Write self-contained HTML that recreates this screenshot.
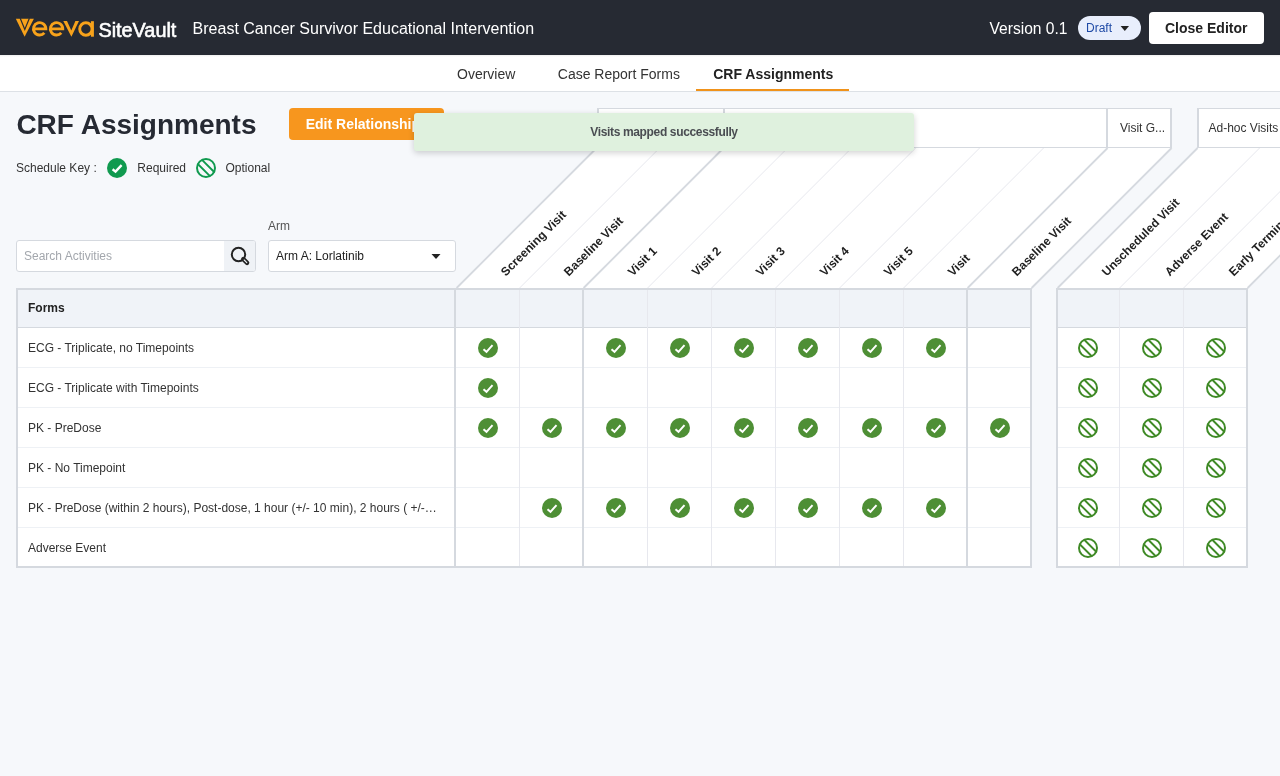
<!DOCTYPE html>
<html><head><meta charset="utf-8"><style>
html,body{margin:0;padding:0}
body{width:1280px;height:776px;overflow:hidden;position:relative;background:#f6f8fb;font-family:"Liberation Sans",sans-serif}
.t{position:absolute;line-height:1;white-space:nowrap}
#root{position:absolute;left:0;top:0;width:1280px;height:776px;will-change:transform}
</style></head><body><div id="root">
<div style="position:absolute;left:0;top:0;width:1280px;height:55px;background:#262a33"></div>
<svg style="position:absolute;left:0;top:0" width="200" height="55" viewBox="0 0 200 55">
<path d="M15.8,18.8 L33.9,18.8 L24.6,36.8 Z" fill="#f7a21b"/>
<path d="M20.2,18.2 L24.8,29.4 L29.4,18.2" fill="none" stroke="#262a33" stroke-width="1.2" stroke-linejoin="miter"/>
<g fill="none" stroke="#f7a21b" stroke-width="2.9">
<path d="M35,28.85 L45.85,28.85 A6.2,6.2 0 1 0 44.35,32.9"/>
<path d="M51.9,28.85 L62.75,28.85 A6.2,6.2 0 1 0 61.25,32.9"/>
<circle cx="85.9" cy="29" r="6.2"/>
</g>
<path d="M63.3,21.1 L67,21.1 L71.3,30.6 L75.4,21.1 L79,21.1 L71.4,36.7 Z" fill="#f7a21b"/>
<rect x="90.9" y="21.2" width="3" height="15.5" fill="#f7a21b"/>
<text x="98.4" y="36.5" font-family="Liberation Sans" font-weight="400" font-size="20.4" fill="#fff" stroke="#fff" stroke-width="0.6" textLength="78" lengthAdjust="spacingAndGlyphs">SiteVault</text>
</svg>
<div class="t" style="left:192.6px;top:21.00px;font-size:16px;font-weight:400;color:#fff;">Breast Cancer Survivor Educational Intervention</div>
<div class="t" style="left:989.5px;top:21.00px;font-size:15.6px;font-weight:400;color:#fff;">Version 0.1</div>
<div style="position:absolute;left:1078px;top:16px;width:63px;height:24px;border-radius:12px;background:#e8eefc"></div>
<div class="t" style="left:1086px;top:22.00px;font-size:12px;font-weight:400;color:#1f4aa6;">Draft</div>
<svg style="position:absolute;left:1120px;top:25px" width="10" height="7"><path d="M0.6,1 L9,1 L4.8,6 Z" fill="#222"/></svg>
<div style="position:absolute;left:1149px;top:12px;width:115px;height:32px;border-radius:4px;background:#fff"></div>
<div class="t" style="left:1165px;top:21.00px;font-size:14px;font-weight:700;color:#222;">Close Editor</div>
<div style="position:absolute;left:0;top:55px;width:1280px;height:36px;background:#fff;border-bottom:1px solid #dde1e6"></div>
<div style="position:absolute;left:0;top:55px;width:1280px;height:2px;background:linear-gradient(rgba(0,0,0,0.07),rgba(0,0,0,0))"></div>
<div class="t" style="left:457px;top:67.00px;font-size:14px;font-weight:400;color:#333;">Overview</div>
<div class="t" style="left:557.8px;top:67.00px;font-size:14px;font-weight:400;color:#333;">Case Report Forms</div>
<div class="t" style="left:713.2px;top:67.00px;font-size:14px;font-weight:700;color:#222;">CRF Assignments</div>
<div style="position:absolute;left:696px;top:89px;width:153px;height:2px;background:#f0921a"></div>
<div class="t" style="left:16.4px;top:111.00px;font-size:28px;font-weight:700;color:#262a33;">CRF Assignments</div>
<div style="position:absolute;left:289px;top:108px;width:155px;height:32px;border-radius:4px;background:#f7961e"></div>
<div class="t" style="left:305.7px;top:117.00px;font-size:14px;font-weight:700;color:#fff;">Edit Relationships</div>
<div class="t" style="left:16px;top:162.00px;font-size:12px;font-weight:400;color:#333;">Schedule Key :</div>
<svg style="position:absolute;left:107px;top:158px" width="20" height="20" viewBox="0 0 20 20"><circle cx="10" cy="10" r="10" fill="#109a4f"/><path d="M5.6,11.3 L8.5,13.6 L14.6,7.2" fill="none" stroke="#fff" stroke-width="2.4"/></svg>
<div class="t" style="left:137.3px;top:162.00px;font-size:12px;font-weight:400;color:#333;">Required</div>
<svg style="position:absolute;left:196px;top:158px" width="20" height="20" viewBox="0 0 20 20"><defs><clipPath id="kc"><circle cx="10" cy="10" r="9.5"/></clipPath></defs><circle cx="10" cy="10" r="9" fill="none" stroke="#109a4f" stroke-width="2"/><path clip-path="url(#kc)" d="M0.8,5.0 L15.0,19.2 M5.0,0.8 L19.2,15.0" stroke="#109a4f" stroke-width="1.9"/></svg>
<div class="t" style="left:225.5px;top:162.00px;font-size:12px;font-weight:400;color:#333;">Optional</div>
<div class="t" style="left:268px;top:220.00px;font-size:12px;font-weight:400;color:#555;">Arm</div>
<div style="position:absolute;left:16px;top:240px;width:238px;height:30px;border:1px solid #d5d9df;border-radius:3px;background:#fff;overflow:hidden"><div style="position:absolute;right:0;top:0;width:31px;height:30px;background:#eff2f6"></div></div>
<div class="t" style="left:24px;top:250.00px;font-size:12px;font-weight:400;color:#a3a7ad;">Search Activities</div>
<svg style="position:absolute;left:228px;top:244px" width="24" height="24" viewBox="0 0 24 24"><circle cx="10.5" cy="10.5" r="6.7" fill="none" stroke="#222" stroke-width="2"/><path d="M15.3,15.1 L19.1,18.9" stroke="#222" stroke-width="4.4" stroke-linecap="round"/><path d="M16.2,16.0 L18.8,18.6" stroke="#eff2f6" stroke-width="1.1" stroke-linecap="round"/></svg>
<div style="position:absolute;left:268px;top:240px;width:186px;height:30px;border:1px solid #d5d9df;border-radius:3px;background:#fff"></div>
<div class="t" style="left:276px;top:250.00px;font-size:12px;font-weight:400;color:#222;">Arm A: Lorlatinib</div>
<svg style="position:absolute;left:431px;top:253px" width="10" height="7"><path d="M0.5,1 L9.5,1 L5,6 Z" fill="#222"/></svg>
<svg style="position:absolute;left:0;top:0" width="1280" height="776" viewBox="0 0 1280 776">
<path d="M457,288 L1032,288 L1172,148 L597,148 Z" fill="#fff"/>
<path d="M1057,288 L1248,288 L1388,148 L1197,148 Z" fill="#fff"/>
<line x1="456.6" y1="288" x2="596.6" y2="148" stroke="#d5d9df" stroke-width="1.8"/>
<line x1="519.6" y1="288" x2="659.6" y2="148" stroke="#e7e8ee" stroke-width="1"/>
<line x1="583.6" y1="288" x2="723.6" y2="148" stroke="#d5d9df" stroke-width="1.8"/>
<line x1="647.6" y1="288" x2="787.6" y2="148" stroke="#e7e8ee" stroke-width="1"/>
<line x1="711.6" y1="288" x2="851.6" y2="148" stroke="#e7e8ee" stroke-width="1"/>
<line x1="775.6" y1="288" x2="915.6" y2="148" stroke="#e7e8ee" stroke-width="1"/>
<line x1="839.6" y1="288" x2="979.6" y2="148" stroke="#e7e8ee" stroke-width="1"/>
<line x1="903.6" y1="288" x2="1043.6" y2="148" stroke="#e7e8ee" stroke-width="1"/>
<line x1="967.6" y1="288" x2="1107.6" y2="148" stroke="#d5d9df" stroke-width="1.8"/>
<line x1="1031.6" y1="288" x2="1171.6" y2="148" stroke="#d5d9df" stroke-width="1.8"/>
<line x1="1057.6" y1="288" x2="1197.6" y2="148" stroke="#d5d9df" stroke-width="1.8"/>
<line x1="1119.6" y1="288" x2="1259.6" y2="148" stroke="#e7e8ee" stroke-width="1"/>
<line x1="1183.6" y1="288" x2="1323.6" y2="148" stroke="#e7e8ee" stroke-width="1"/>
<line x1="1247.6" y1="288" x2="1387.6" y2="148" stroke="#d5d9df" stroke-width="1.8"/>
<text x="505.8" y="276.7" transform="rotate(-45 505.8 276.7)" font-family="Liberation Sans" font-weight="700" font-size="12" fill="#222">Screening Visit</text>
<text x="568.8" y="276.7" transform="rotate(-45 568.8 276.7)" font-family="Liberation Sans" font-weight="700" font-size="12" fill="#222">Baseline Visit</text>
<text x="632.8" y="276.7" transform="rotate(-45 632.8 276.7)" font-family="Liberation Sans" font-weight="700" font-size="12" fill="#222">Visit 1</text>
<text x="696.8" y="276.7" transform="rotate(-45 696.8 276.7)" font-family="Liberation Sans" font-weight="700" font-size="12" fill="#222">Visit 2</text>
<text x="760.8" y="276.7" transform="rotate(-45 760.8 276.7)" font-family="Liberation Sans" font-weight="700" font-size="12" fill="#222">Visit 3</text>
<text x="824.8" y="276.7" transform="rotate(-45 824.8 276.7)" font-family="Liberation Sans" font-weight="700" font-size="12" fill="#222">Visit 4</text>
<text x="888.8" y="276.7" transform="rotate(-45 888.8 276.7)" font-family="Liberation Sans" font-weight="700" font-size="12" fill="#222">Visit 5</text>
<text x="952.8" y="276.7" transform="rotate(-45 952.8 276.7)" font-family="Liberation Sans" font-weight="700" font-size="12" fill="#222">Visit</text>
<text x="1016.8" y="276.7" transform="rotate(-45 1016.8 276.7)" font-family="Liberation Sans" font-weight="700" font-size="12" fill="#222">Baseline Visit</text>
<text x="1106.8" y="276.7" transform="rotate(-45 1106.8 276.7)" font-family="Liberation Sans" font-weight="700" font-size="12" fill="#222">Unscheduled Visit</text>
<text x="1169.8" y="276.7" transform="rotate(-45 1169.8 276.7)" font-family="Liberation Sans" font-weight="700" font-size="12" fill="#222">Adverse Event</text>
<text x="1233.8" y="276.7" transform="rotate(-45 1233.8 276.7)" font-family="Liberation Sans" font-weight="700" font-size="12" fill="#222">Early Termination</text>
</svg>
<div style="position:absolute;left:597px;top:108px;width:124px;height:38px;border:solid #d5d9df;border-width:1px 2px;background:#fff;overflow:hidden"></div>
<div style="position:absolute;left:723px;top:108px;width:381px;height:38px;border:solid #d5d9df;border-width:1px 2px;background:#fff;overflow:hidden"></div>
<div style="position:absolute;left:1106px;top:108px;width:62px;height:38px;border:solid #d5d9df;border-width:1px 2px;background:#fff;overflow:hidden"></div><div class="t" style="left:1120px;top:122.00px;font-size:12px;font-weight:400;color:#333;">Visit G...</div>
<div style="position:absolute;left:1197px;top:108px;width:199px;height:38px;border:solid #d5d9df;border-width:1px 2px;background:#fff;overflow:hidden"></div><div class="t" style="left:1208.5px;top:122.00px;font-size:12px;font-weight:400;color:#333;">Ad-hoc Visits</div>
<div style="position:absolute;left:16px;top:288px;width:1012px;height:276px;border:2px solid #d5d9df;background:#fff"></div>
<div style="position:absolute;left:18px;top:290px;width:1012px;height:37px;background:#f0f3f8"></div>
<div style="position:absolute;left:1058px;top:290px;width:188px;height:37px;background:#f0f3f8"></div>
<div style="position:absolute;left:1056px;top:288px;width:188px;height:276px;border:2px solid #d5d9df;background:transparent"></div>
<div style="position:absolute;left:1058px;top:328px;width:188px;height:238px;background:#fff"></div>
<div style="position:absolute;left:18px;top:327px;width:1012px;height:1px;background:#d5d9df"></div>
<div style="position:absolute;left:1058px;top:327px;width:188px;height:1px;background:#d5d9df"></div>
<div style="position:absolute;left:18px;top:367px;width:1012px;height:1px;background:#eef1f5"></div>
<div style="position:absolute;left:1058px;top:367px;width:188px;height:1px;background:#eef1f5"></div>
<div style="position:absolute;left:18px;top:407px;width:1012px;height:1px;background:#eef1f5"></div>
<div style="position:absolute;left:1058px;top:407px;width:188px;height:1px;background:#eef1f5"></div>
<div style="position:absolute;left:18px;top:447px;width:1012px;height:1px;background:#eef1f5"></div>
<div style="position:absolute;left:1058px;top:447px;width:188px;height:1px;background:#eef1f5"></div>
<div style="position:absolute;left:18px;top:487px;width:1012px;height:1px;background:#eef1f5"></div>
<div style="position:absolute;left:1058px;top:487px;width:188px;height:1px;background:#eef1f5"></div>
<div style="position:absolute;left:18px;top:527px;width:1012px;height:1px;background:#eef1f5"></div>
<div style="position:absolute;left:1058px;top:527px;width:188px;height:1px;background:#eef1f5"></div>
<div style="position:absolute;left:454px;top:290px;width:2px;height:276px;background:#d5d9df"></div>
<div style="position:absolute;left:582px;top:290px;width:2px;height:276px;background:#d5d9df"></div>
<div style="position:absolute;left:966px;top:290px;width:2px;height:276px;background:#d5d9df"></div>
<div style="position:absolute;left:519px;top:290px;width:1px;height:276px;background:#e7e8ee"></div>
<div style="position:absolute;left:647px;top:290px;width:1px;height:276px;background:#e7e8ee"></div>
<div style="position:absolute;left:711px;top:290px;width:1px;height:276px;background:#e7e8ee"></div>
<div style="position:absolute;left:775px;top:290px;width:1px;height:276px;background:#e7e8ee"></div>
<div style="position:absolute;left:839px;top:290px;width:1px;height:276px;background:#e7e8ee"></div>
<div style="position:absolute;left:903px;top:290px;width:1px;height:276px;background:#e7e8ee"></div>
<div style="position:absolute;left:1119px;top:290px;width:1px;height:276px;background:#e7e8ee"></div>
<div style="position:absolute;left:1183px;top:290px;width:1px;height:276px;background:#e7e8ee"></div>
<div class="t" style="left:28px;top:302.00px;font-size:12px;font-weight:700;color:#222;">Forms</div>
<div class="t" style="left:28px;top:342.00px;font-size:12px;font-weight:400;color:#333;">ECG - Triplicate, no Timepoints</div>
<div class="t" style="left:28px;top:382.00px;font-size:12px;font-weight:400;color:#333;">ECG - Triplicate with Timepoints</div>
<div class="t" style="left:28px;top:422.00px;font-size:12px;font-weight:400;color:#333;">PK - PreDose</div>
<div class="t" style="left:28px;top:462.00px;font-size:12px;font-weight:400;color:#333;">PK - No Timepoint</div>
<div class="t" style="left:28px;top:502.00px;font-size:12px;font-weight:400;color:#333;">PK - PreDose (within 2 hours), Post-dose, 1 hour (+/- 10 min), 2 hours ( +/-…</div>
<div class="t" style="left:28px;top:542.00px;font-size:12px;font-weight:400;color:#333;">Adverse Event</div>
<svg style="position:absolute;left:478px;top:338px" width="20" height="20" viewBox="0 0 20 20"><circle cx="10" cy="10" r="10" fill="#4e8f35"/><path d="M5.5,11.2 L8.5,13.8 L14.5,7.1" fill="none" stroke="#fff" stroke-width="2"/></svg>
<svg style="position:absolute;left:606px;top:338px" width="20" height="20" viewBox="0 0 20 20"><circle cx="10" cy="10" r="10" fill="#4e8f35"/><path d="M5.5,11.2 L8.5,13.8 L14.5,7.1" fill="none" stroke="#fff" stroke-width="2"/></svg>
<svg style="position:absolute;left:670px;top:338px" width="20" height="20" viewBox="0 0 20 20"><circle cx="10" cy="10" r="10" fill="#4e8f35"/><path d="M5.5,11.2 L8.5,13.8 L14.5,7.1" fill="none" stroke="#fff" stroke-width="2"/></svg>
<svg style="position:absolute;left:734px;top:338px" width="20" height="20" viewBox="0 0 20 20"><circle cx="10" cy="10" r="10" fill="#4e8f35"/><path d="M5.5,11.2 L8.5,13.8 L14.5,7.1" fill="none" stroke="#fff" stroke-width="2"/></svg>
<svg style="position:absolute;left:798px;top:338px" width="20" height="20" viewBox="0 0 20 20"><circle cx="10" cy="10" r="10" fill="#4e8f35"/><path d="M5.5,11.2 L8.5,13.8 L14.5,7.1" fill="none" stroke="#fff" stroke-width="2"/></svg>
<svg style="position:absolute;left:862px;top:338px" width="20" height="20" viewBox="0 0 20 20"><circle cx="10" cy="10" r="10" fill="#4e8f35"/><path d="M5.5,11.2 L8.5,13.8 L14.5,7.1" fill="none" stroke="#fff" stroke-width="2"/></svg>
<svg style="position:absolute;left:926px;top:338px" width="20" height="20" viewBox="0 0 20 20"><circle cx="10" cy="10" r="10" fill="#4e8f35"/><path d="M5.5,11.2 L8.5,13.8 L14.5,7.1" fill="none" stroke="#fff" stroke-width="2"/></svg>
<svg style="position:absolute;left:1078px;top:338px" width="20" height="20" viewBox="0 0 20 20"><circle cx="10" cy="10" r="9" fill="none" stroke="#3f8a26" stroke-width="2"/><path clip-path="url(#oc)" d="M1.0,5.5 L14.5,19.0 M5.5,1.0 L19.0,14.5" stroke="#3f8a26" stroke-width="1.9"/></svg>
<svg style="position:absolute;left:1142px;top:338px" width="20" height="20" viewBox="0 0 20 20"><circle cx="10" cy="10" r="9" fill="none" stroke="#3f8a26" stroke-width="2"/><path clip-path="url(#oc)" d="M1.0,5.5 L14.5,19.0 M5.5,1.0 L19.0,14.5" stroke="#3f8a26" stroke-width="1.9"/></svg>
<svg style="position:absolute;left:1206px;top:338px" width="20" height="20" viewBox="0 0 20 20"><circle cx="10" cy="10" r="9" fill="none" stroke="#3f8a26" stroke-width="2"/><path clip-path="url(#oc)" d="M1.0,5.5 L14.5,19.0 M5.5,1.0 L19.0,14.5" stroke="#3f8a26" stroke-width="1.9"/></svg>
<svg style="position:absolute;left:478px;top:378px" width="20" height="20" viewBox="0 0 20 20"><circle cx="10" cy="10" r="10" fill="#4e8f35"/><path d="M5.5,11.2 L8.5,13.8 L14.5,7.1" fill="none" stroke="#fff" stroke-width="2"/></svg>
<svg style="position:absolute;left:1078px;top:378px" width="20" height="20" viewBox="0 0 20 20"><circle cx="10" cy="10" r="9" fill="none" stroke="#3f8a26" stroke-width="2"/><path clip-path="url(#oc)" d="M1.0,5.5 L14.5,19.0 M5.5,1.0 L19.0,14.5" stroke="#3f8a26" stroke-width="1.9"/></svg>
<svg style="position:absolute;left:1142px;top:378px" width="20" height="20" viewBox="0 0 20 20"><circle cx="10" cy="10" r="9" fill="none" stroke="#3f8a26" stroke-width="2"/><path clip-path="url(#oc)" d="M1.0,5.5 L14.5,19.0 M5.5,1.0 L19.0,14.5" stroke="#3f8a26" stroke-width="1.9"/></svg>
<svg style="position:absolute;left:1206px;top:378px" width="20" height="20" viewBox="0 0 20 20"><circle cx="10" cy="10" r="9" fill="none" stroke="#3f8a26" stroke-width="2"/><path clip-path="url(#oc)" d="M1.0,5.5 L14.5,19.0 M5.5,1.0 L19.0,14.5" stroke="#3f8a26" stroke-width="1.9"/></svg>
<svg style="position:absolute;left:478px;top:418px" width="20" height="20" viewBox="0 0 20 20"><circle cx="10" cy="10" r="10" fill="#4e8f35"/><path d="M5.5,11.2 L8.5,13.8 L14.5,7.1" fill="none" stroke="#fff" stroke-width="2"/></svg>
<svg style="position:absolute;left:542px;top:418px" width="20" height="20" viewBox="0 0 20 20"><circle cx="10" cy="10" r="10" fill="#4e8f35"/><path d="M5.5,11.2 L8.5,13.8 L14.5,7.1" fill="none" stroke="#fff" stroke-width="2"/></svg>
<svg style="position:absolute;left:606px;top:418px" width="20" height="20" viewBox="0 0 20 20"><circle cx="10" cy="10" r="10" fill="#4e8f35"/><path d="M5.5,11.2 L8.5,13.8 L14.5,7.1" fill="none" stroke="#fff" stroke-width="2"/></svg>
<svg style="position:absolute;left:670px;top:418px" width="20" height="20" viewBox="0 0 20 20"><circle cx="10" cy="10" r="10" fill="#4e8f35"/><path d="M5.5,11.2 L8.5,13.8 L14.5,7.1" fill="none" stroke="#fff" stroke-width="2"/></svg>
<svg style="position:absolute;left:734px;top:418px" width="20" height="20" viewBox="0 0 20 20"><circle cx="10" cy="10" r="10" fill="#4e8f35"/><path d="M5.5,11.2 L8.5,13.8 L14.5,7.1" fill="none" stroke="#fff" stroke-width="2"/></svg>
<svg style="position:absolute;left:798px;top:418px" width="20" height="20" viewBox="0 0 20 20"><circle cx="10" cy="10" r="10" fill="#4e8f35"/><path d="M5.5,11.2 L8.5,13.8 L14.5,7.1" fill="none" stroke="#fff" stroke-width="2"/></svg>
<svg style="position:absolute;left:862px;top:418px" width="20" height="20" viewBox="0 0 20 20"><circle cx="10" cy="10" r="10" fill="#4e8f35"/><path d="M5.5,11.2 L8.5,13.8 L14.5,7.1" fill="none" stroke="#fff" stroke-width="2"/></svg>
<svg style="position:absolute;left:926px;top:418px" width="20" height="20" viewBox="0 0 20 20"><circle cx="10" cy="10" r="10" fill="#4e8f35"/><path d="M5.5,11.2 L8.5,13.8 L14.5,7.1" fill="none" stroke="#fff" stroke-width="2"/></svg>
<svg style="position:absolute;left:990px;top:418px" width="20" height="20" viewBox="0 0 20 20"><circle cx="10" cy="10" r="10" fill="#4e8f35"/><path d="M5.5,11.2 L8.5,13.8 L14.5,7.1" fill="none" stroke="#fff" stroke-width="2"/></svg>
<svg style="position:absolute;left:1078px;top:418px" width="20" height="20" viewBox="0 0 20 20"><circle cx="10" cy="10" r="9" fill="none" stroke="#3f8a26" stroke-width="2"/><path clip-path="url(#oc)" d="M1.0,5.5 L14.5,19.0 M5.5,1.0 L19.0,14.5" stroke="#3f8a26" stroke-width="1.9"/></svg>
<svg style="position:absolute;left:1142px;top:418px" width="20" height="20" viewBox="0 0 20 20"><circle cx="10" cy="10" r="9" fill="none" stroke="#3f8a26" stroke-width="2"/><path clip-path="url(#oc)" d="M1.0,5.5 L14.5,19.0 M5.5,1.0 L19.0,14.5" stroke="#3f8a26" stroke-width="1.9"/></svg>
<svg style="position:absolute;left:1206px;top:418px" width="20" height="20" viewBox="0 0 20 20"><circle cx="10" cy="10" r="9" fill="none" stroke="#3f8a26" stroke-width="2"/><path clip-path="url(#oc)" d="M1.0,5.5 L14.5,19.0 M5.5,1.0 L19.0,14.5" stroke="#3f8a26" stroke-width="1.9"/></svg>
<svg style="position:absolute;left:1078px;top:458px" width="20" height="20" viewBox="0 0 20 20"><circle cx="10" cy="10" r="9" fill="none" stroke="#3f8a26" stroke-width="2"/><path clip-path="url(#oc)" d="M1.0,5.5 L14.5,19.0 M5.5,1.0 L19.0,14.5" stroke="#3f8a26" stroke-width="1.9"/></svg>
<svg style="position:absolute;left:1142px;top:458px" width="20" height="20" viewBox="0 0 20 20"><circle cx="10" cy="10" r="9" fill="none" stroke="#3f8a26" stroke-width="2"/><path clip-path="url(#oc)" d="M1.0,5.5 L14.5,19.0 M5.5,1.0 L19.0,14.5" stroke="#3f8a26" stroke-width="1.9"/></svg>
<svg style="position:absolute;left:1206px;top:458px" width="20" height="20" viewBox="0 0 20 20"><circle cx="10" cy="10" r="9" fill="none" stroke="#3f8a26" stroke-width="2"/><path clip-path="url(#oc)" d="M1.0,5.5 L14.5,19.0 M5.5,1.0 L19.0,14.5" stroke="#3f8a26" stroke-width="1.9"/></svg>
<svg style="position:absolute;left:542px;top:498px" width="20" height="20" viewBox="0 0 20 20"><circle cx="10" cy="10" r="10" fill="#4e8f35"/><path d="M5.5,11.2 L8.5,13.8 L14.5,7.1" fill="none" stroke="#fff" stroke-width="2"/></svg>
<svg style="position:absolute;left:606px;top:498px" width="20" height="20" viewBox="0 0 20 20"><circle cx="10" cy="10" r="10" fill="#4e8f35"/><path d="M5.5,11.2 L8.5,13.8 L14.5,7.1" fill="none" stroke="#fff" stroke-width="2"/></svg>
<svg style="position:absolute;left:670px;top:498px" width="20" height="20" viewBox="0 0 20 20"><circle cx="10" cy="10" r="10" fill="#4e8f35"/><path d="M5.5,11.2 L8.5,13.8 L14.5,7.1" fill="none" stroke="#fff" stroke-width="2"/></svg>
<svg style="position:absolute;left:734px;top:498px" width="20" height="20" viewBox="0 0 20 20"><circle cx="10" cy="10" r="10" fill="#4e8f35"/><path d="M5.5,11.2 L8.5,13.8 L14.5,7.1" fill="none" stroke="#fff" stroke-width="2"/></svg>
<svg style="position:absolute;left:798px;top:498px" width="20" height="20" viewBox="0 0 20 20"><circle cx="10" cy="10" r="10" fill="#4e8f35"/><path d="M5.5,11.2 L8.5,13.8 L14.5,7.1" fill="none" stroke="#fff" stroke-width="2"/></svg>
<svg style="position:absolute;left:862px;top:498px" width="20" height="20" viewBox="0 0 20 20"><circle cx="10" cy="10" r="10" fill="#4e8f35"/><path d="M5.5,11.2 L8.5,13.8 L14.5,7.1" fill="none" stroke="#fff" stroke-width="2"/></svg>
<svg style="position:absolute;left:926px;top:498px" width="20" height="20" viewBox="0 0 20 20"><circle cx="10" cy="10" r="10" fill="#4e8f35"/><path d="M5.5,11.2 L8.5,13.8 L14.5,7.1" fill="none" stroke="#fff" stroke-width="2"/></svg>
<svg style="position:absolute;left:1078px;top:498px" width="20" height="20" viewBox="0 0 20 20"><circle cx="10" cy="10" r="9" fill="none" stroke="#3f8a26" stroke-width="2"/><path clip-path="url(#oc)" d="M1.0,5.5 L14.5,19.0 M5.5,1.0 L19.0,14.5" stroke="#3f8a26" stroke-width="1.9"/></svg>
<svg style="position:absolute;left:1142px;top:498px" width="20" height="20" viewBox="0 0 20 20"><circle cx="10" cy="10" r="9" fill="none" stroke="#3f8a26" stroke-width="2"/><path clip-path="url(#oc)" d="M1.0,5.5 L14.5,19.0 M5.5,1.0 L19.0,14.5" stroke="#3f8a26" stroke-width="1.9"/></svg>
<svg style="position:absolute;left:1206px;top:498px" width="20" height="20" viewBox="0 0 20 20"><circle cx="10" cy="10" r="9" fill="none" stroke="#3f8a26" stroke-width="2"/><path clip-path="url(#oc)" d="M1.0,5.5 L14.5,19.0 M5.5,1.0 L19.0,14.5" stroke="#3f8a26" stroke-width="1.9"/></svg>
<svg style="position:absolute;left:1078px;top:538px" width="20" height="20" viewBox="0 0 20 20"><circle cx="10" cy="10" r="9" fill="none" stroke="#3f8a26" stroke-width="2"/><path clip-path="url(#oc)" d="M1.0,5.5 L14.5,19.0 M5.5,1.0 L19.0,14.5" stroke="#3f8a26" stroke-width="1.9"/></svg>
<svg style="position:absolute;left:1142px;top:538px" width="20" height="20" viewBox="0 0 20 20"><circle cx="10" cy="10" r="9" fill="none" stroke="#3f8a26" stroke-width="2"/><path clip-path="url(#oc)" d="M1.0,5.5 L14.5,19.0 M5.5,1.0 L19.0,14.5" stroke="#3f8a26" stroke-width="1.9"/></svg>
<svg style="position:absolute;left:1206px;top:538px" width="20" height="20" viewBox="0 0 20 20"><circle cx="10" cy="10" r="9" fill="none" stroke="#3f8a26" stroke-width="2"/><path clip-path="url(#oc)" d="M1.0,5.5 L14.5,19.0 M5.5,1.0 L19.0,14.5" stroke="#3f8a26" stroke-width="1.9"/></svg>
<svg width="0" height="0" style="position:absolute"><defs><clipPath id="oc"><circle cx="10" cy="10" r="9.5"/></clipPath></defs></svg>
<div style="position:absolute;left:414px;top:113px;width:500px;height:38px;border-radius:3px;background:#dff1de;box-shadow:0 2px 6px rgba(0,0,0,0.18)"></div>
<div class="t" style="left:414px;top:126.00px;font-size:12px;font-weight:700;color:#4a4d52;width:500px;text-align:center;letter-spacing:-0.35px">Visits mapped successfully</div>
</div></body></html>
